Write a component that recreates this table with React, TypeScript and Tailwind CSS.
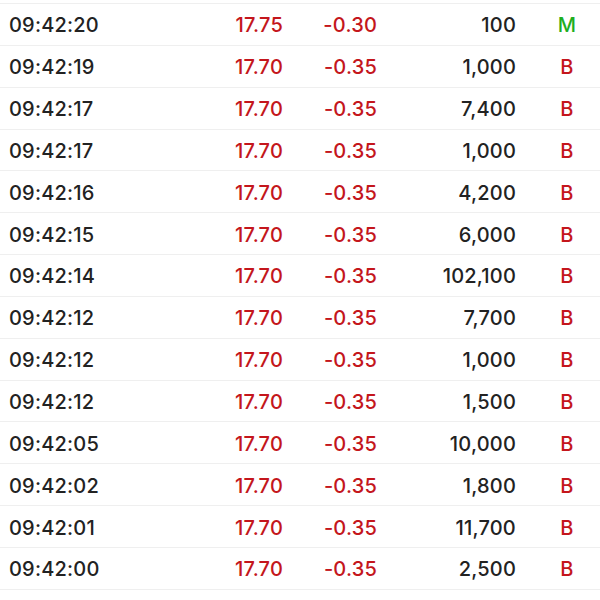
const trades = [
  { time: '09:42:20', price: '17.75', change: '-0.30', volume: '100', side: 'M' },
  { time: '09:42:19', price: '17.70', change: '-0.35', volume: '1,000', side: 'B' },
  { time: '09:42:17', price: '17.70', change: '-0.35', volume: '7,400', side: 'B' },
  { time: '09:42:17', price: '17.70', change: '-0.35', volume: '1,000', side: 'B' },
  { time: '09:42:16', price: '17.70', change: '-0.35', volume: '4,200', side: 'B' },
  { time: '09:42:15', price: '17.70', change: '-0.35', volume: '6,000', side: 'B' },
  { time: '09:42:14', price: '17.70', change: '-0.35', volume: '102,100', side: 'B' },
  { time: '09:42:12', price: '17.70', change: '-0.35', volume: '7,700', side: 'B' },
  { time: '09:42:12', price: '17.70', change: '-0.35', volume: '1,000', side: 'B' },
  { time: '09:42:12', price: '17.70', change: '-0.35', volume: '1,500', side: 'B' },
  { time: '09:42:05', price: '17.70', change: '-0.35', volume: '10,000', side: 'B' },
  { time: '09:42:02', price: '17.70', change: '-0.35', volume: '1,800', side: 'B' },
  { time: '09:42:01', price: '17.70', change: '-0.35', volume: '11,700', side: 'B' },
  { time: '09:42:00', price: '17.70', change: '-0.35', volume: '2,500', side: 'B' },
];

export default function App() {
  return (
    <div className="w-[600px] h-[600px] bg-white overflow-hidden pt-[3px] font-['Inter',sans-serif] text-[20px] font-medium tracking-[0.2px]">
      <div className="border-t border-[#efefef]">
        {trades.map((t, i) => (
          <div key={i} className="flex items-center h-[41.85px] pt-[2px] border-b border-[#efefef]">
            <span className="shrink-0 w-[110px] pl-[9px] text-[#222]">{t.time}</span>
            <span className="shrink-0 w-[173px] text-right text-[#c4161c]">{t.price}</span>
            <span className="shrink-0 w-[94px] text-right text-[#c4161c]">{t.change}</span>
            <span className="shrink-0 w-[139px] text-right text-[#222]">{t.volume}</span>
            <span className={`shrink-0 w-[40px] ml-[31px] text-center ${t.side === 'M' ? 'text-[#1fae1f]' : 'text-[#c4161c]'}`}>
              {t.side}
            </span>
          </div>
        ))}
      </div>
    </div>
  );
}
